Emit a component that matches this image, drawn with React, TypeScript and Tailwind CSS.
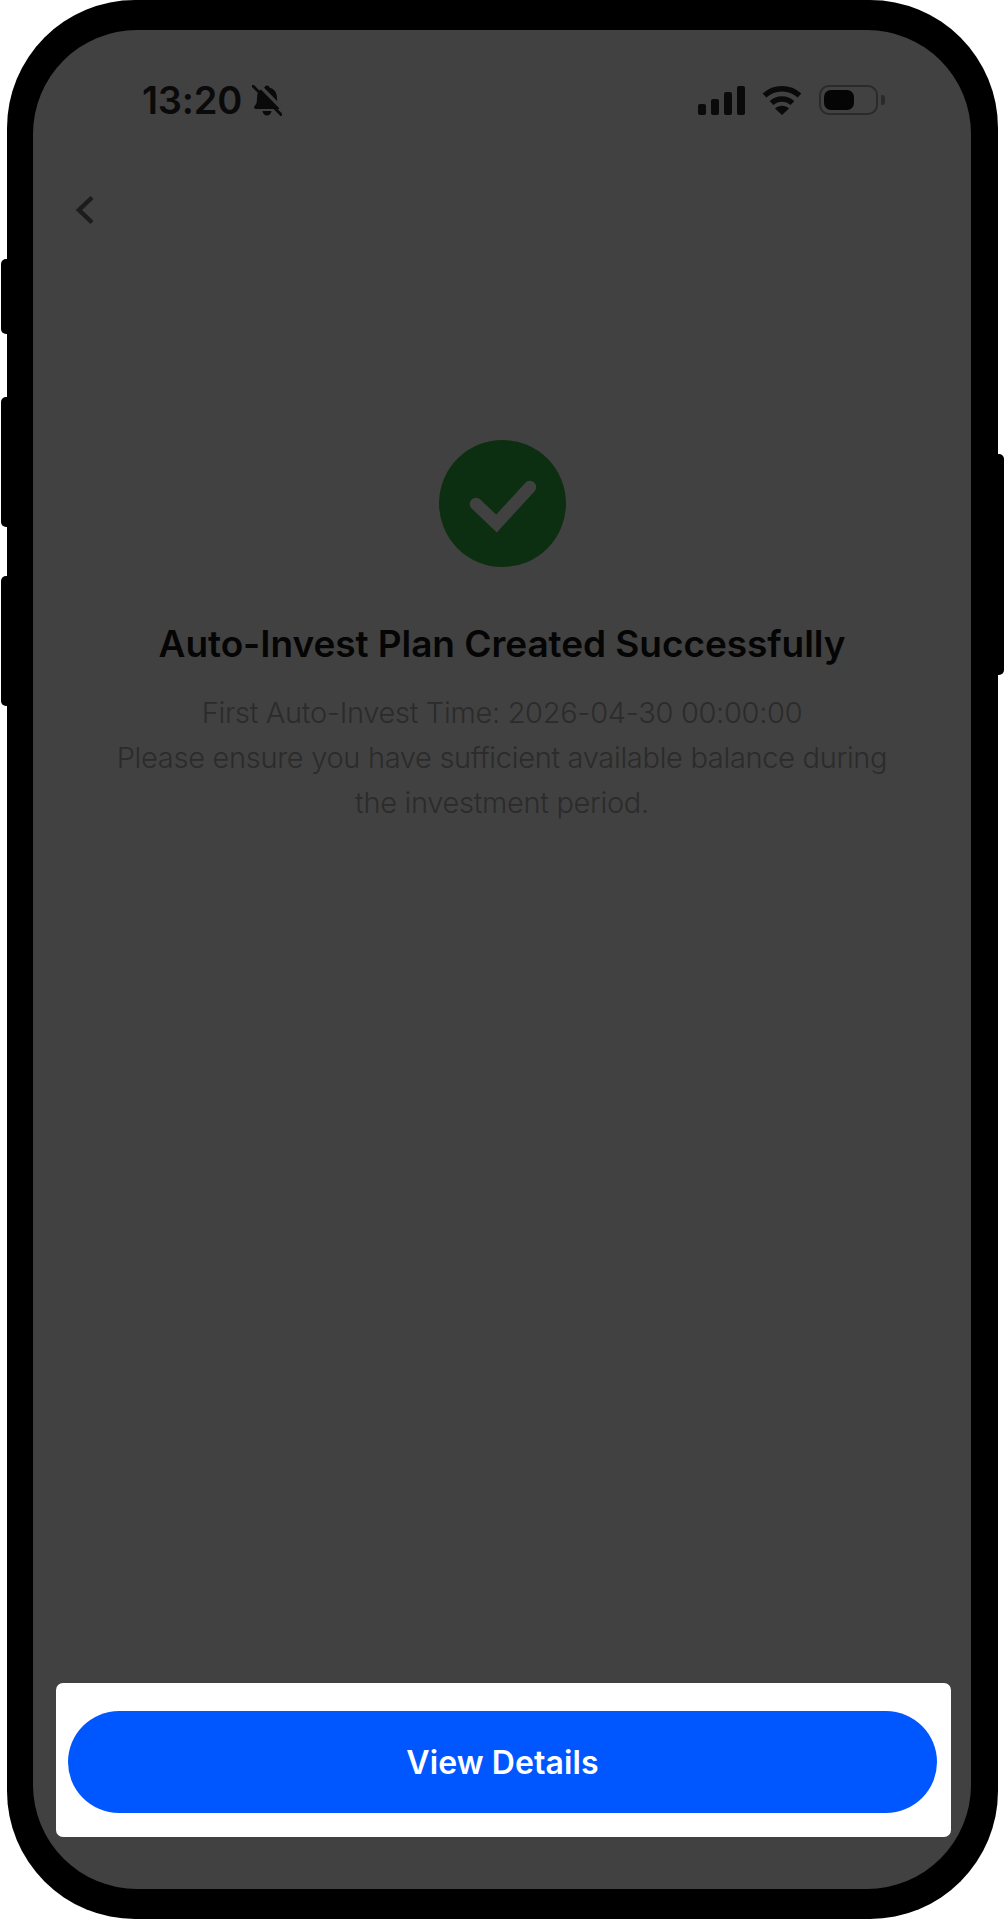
function BellOff() {
  return (
    <svg width="30" height="31" viewBox="0 0 30 31" className="ml-[10px] shrink-0">
      <path
        d="M15 0.500c1.500 0 2.500 1 2.700 2.300 4.500 1.100 7 4.700 7.200 9l.3 4.800c.1 2 1 3.200 2.200 4.500 1 1.100.4 2.900-1.100 2.900H3.700c-1.500 0-2.100-1.800-1.100-2.900 1.200-1.300 2.100-2.500 2.200-4.500l.3-4.800c.2-4.300 2.700-7.900 7.200-9 .2-1.300 1.200-2.300 2.700-2.300z"
        fill="#0a0a0a"
      />
      <path d="M10.500 26h9c-.3 2.600-2.200 4.500-4.500 4.500s-4.200-1.900-4.500-4.500z" fill="#0a0a0a" />
      <path d="M3.500 -3.500L34 27.500" stroke="#414141" strokeWidth="3.500" />
      <path d="M1 1L29 29.500" stroke="#0a0a0a" strokeWidth="2.800" strokeLinecap="round" />
    </svg>
  );
}

function SignalBars() {
  return (
    <div className="flex items-end gap-[5px] h-[29px]">
      <div className="w-[8px] h-[11px] rounded-[2px] bg-[#0a0a0a]" />
      <div className="w-[8px] h-[16px] rounded-[2px] bg-[#0a0a0a]" />
      <div className="w-[8px] h-[23px] rounded-[2px] bg-[#0a0a0a]" />
      <div className="w-[8px] h-[29px] rounded-[2px] bg-[#0a0a0a]" />
    </div>
  );
}

function Wifi() {
  return (
    <svg width="40" height="30" viewBox="0 0 40 30" className="shrink-0">
      <path d="M2.500 10.500C12.500 1.500 27.500 1.500 37.500 10.500" fill="none" stroke="#0a0a0a" strokeWidth="5.500" />
      <path d="M9.500 18C15.500 12.500 24.500 12.500 30.500 18" fill="none" stroke="#0a0a0a" strokeWidth="5.500" />
      <path d="M13 23.500C17 19.800 23 19.800 27 23.500L20 30z" fill="#0a0a0a" />
    </svg>
  );
}

function Battery() {
  return (
    <div className="flex items-center gap-[3px]">
      <div className="w-[59px] h-[30px] rounded-[10px] border-[2px] border-[#2a2a2a] p-[3px] flex">
        <div className="w-[30px] rounded-[7px] bg-[#050505]" />
      </div>
      <div className="w-[4px] h-[10px] rounded-r-[3px] bg-[#2a2a2a]" />
    </div>
  );
}

export default function App() {
  return (
    <div className="relative w-[1005px] h-[1920px] bg-white overflow-hidden font-['Inter',sans-serif]">
      {/* side buttons */}
      <div className="absolute left-[1px] top-[259px] w-[12px] h-[75px] rounded-l-[5px] bg-black" />
      <div className="absolute left-[1px] top-[397px] w-[12px] h-[130px] rounded-l-[5px] bg-black" />
      <div className="absolute left-[1px] top-[576px] w-[12px] h-[130px] rounded-l-[5px] bg-black" />
      <div className="absolute right-[1px] top-[454px] w-[12px] h-[221px] rounded-r-[5px] bg-black" />

      <div className="relative ml-[7px] w-[991px] h-[1919px] rounded-[128px] bg-black pt-[30px] pl-[26px] pr-[27px] pb-[30px]">
        <div className="h-full rounded-[104px] bg-[#414141] flex flex-col">
          <div className="flex items-center justify-between pt-[26px] pl-[109px] pr-[86px] h-[114px]">
            <div className="flex items-center">
              <span className="text-[38px] leading-[40px] font-semibold tracking-[-0.2px] text-[#0a0a0a]">13:20</span>
              <BellOff />
            </div>
            <div className="flex items-center gap-[17px]">
              <SignalBars />
              <Wifi />
              <Battery />
            </div>
          </div>

          <div className="pt-[50px] pl-[41px]">
            <svg width="22" height="32" viewBox="0 0 22 32" className="block">
              <path d="M18 3.500L5 16L18 28.500" fill="none" stroke="#1c1c1c" strokeWidth="4.500" />
            </svg>
          </div>

          <div className="flex flex-col items-center pt-[214px]">
            <div className="w-[127px] h-[127px] rounded-full bg-[#0c2f11] flex items-center justify-center">
              <svg width="127" height="127" viewBox="0 0 127 127">
                <path d="M37 64L57.500 83.500L91 47" fill="none" stroke="#414141" strokeWidth="12.500" strokeLinecap="round" strokeLinejoin="miter" />
              </svg>
            </div>
            <h1 className="mt-[54px] text-[37px] leading-[46px] font-semibold tracking-[-0.06px] text-[#050505] text-center">
              Auto-Invest Plan Created Successfully
            </h1>
            <p className="mt-[23px] text-[29px] leading-[45px] font-light tracking-[-0.31px] text-[#2b2b2b] text-center">
              First Auto-Invest Time: 2026-04-30 00:00:00
              <br />
              Please ensure you have sufficient available balance during
              <br />
              the investment period.
            </p>
          </div>

          <div className="mt-auto mb-[52px] ml-[23px] mr-[20px] h-[154px] rounded-[7px] bg-white flex items-center pl-[12px] pr-[14px]">
            <button className="w-full h-[102px] mt-[4px] pt-[2px] rounded-full bg-[#0057ff] text-white text-[32px] tracking-[0.1px] font-semibold">
              View Details
            </button>
          </div>
        </div>
      </div>
    </div>
  );
}
